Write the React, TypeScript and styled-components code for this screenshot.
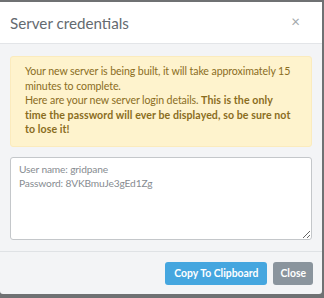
import React from "react";
import styled, { createGlobalStyle } from "styled-components";

const GlobalStyle = createGlobalStyle`
  html, body {
    margin: 0;
    padding: 0;
    background: #6f7173;
    font-family: Lato, "Noto Sans", sans-serif;
  }
`;

const App = () => {
  const details = "User name: gridpane\nPassword: 8VKBmuJe3gEd1Zg";

  return (
    <>
      <GlobalStyle />
      <Backdrop>
        <Modal>
          <Header>
            <Title>Server credentials</Title>
            <CloseX aria-label="Close">×</CloseX>
          </Header>
          <Body>
            <Alert>
              Your new server is being built, it will take approximately 15
              minutes to complete.
              <br />
              Here are your new server login details.{" "}
              <strong>
                This is the only
                <br />
                time the password will ever be displayed, so be sure not to
                lose it!
              </strong>
            </Alert>
            <Details readOnly defaultValue={details} />
          </Body>
          <Footer>
            <Button $variant="primary">Copy To Clipboard</Button>
            <Button $variant="muted">Close</Button>
          </Footer>
        </Modal>
      </Backdrop>
    </>
  );
};

export default App;

const Backdrop = styled.div`
  width: 324px;
  height: 298px;
  padding-top: 2px;
  box-sizing: border-box;
`;

const Modal = styled.div`
  width: 322px;
  background: #f3f4f6;
  border-radius: 0 0 3px 3px;
  overflow: hidden;
`;

const Header = styled.div`
  height: 41px;
  display: flex;
  align-items: center;
  justify-content: space-between;
  padding: 0 10px;
  background: #fff;
  border-bottom: 1px solid #e3e5e8;
`;

const Title = styled.h4`
  margin: 0;
  font-size: 15.2px;
  font-weight: 400;
  color: #646a70;
`;

const CloseX = styled.span`
  font-size: 15px;
  line-height: 1;
  color: #a3a7ab;
  margin-right: 12px;
  margin-top: -3px;
`;

const Body = styled.div`
  padding: 12px 10px 11px;
  border-bottom: 1px solid #dfe2e5;
`;

const Alert = styled.div`
  background: #fef3cd;
  border: 1px solid #fbebbd;
  border-radius: 3px;
  padding: 7px 14px 9px;
  margin-bottom: 10px;
  font-size: 10.6px;
  letter-spacing: -0.1px;
  line-height: 14.6px;
  color: #8a6d1e;

  strong {
    font-weight: 700;
    letter-spacing: 0.08px;
  }
`;

const Details = styled.textarea`
  display: block;
  box-sizing: border-box;
  width: 100%;
  height: 83px;
  margin: 0;
  padding: 4px 8px;
  border: 1px solid #c4c7ca;
  border-radius: 3px;
  background: #fff;
  font-family: Lato, "Noto Sans", sans-serif;
  font-size: 10.2px;
  letter-spacing: -0.15px;
  line-height: 14px;
  color: #878c91;
  resize: vertical;
  outline: none;
`;

const Footer = styled.div`
  display: flex;
  justify-content: flex-end;
  gap: 6px;
  padding: 10px 9px 9px;
`;

const Button = styled.button<{ $variant: "primary" | "muted" }>`
  height: 23px;
  padding: 0 ${(p) => (p.$variant === "primary" ? "9px" : "7px")};
  border: none;
  border-radius: 3px;
  font-family: Lato, "Noto Sans", sans-serif;
  font-size: 10.4px;
  font-weight: 700;
  color: #fff;
  background: ${(p) => (p.$variant === "primary" ? "#45a6df" : "#8a949d")};
  cursor: pointer;
`;
